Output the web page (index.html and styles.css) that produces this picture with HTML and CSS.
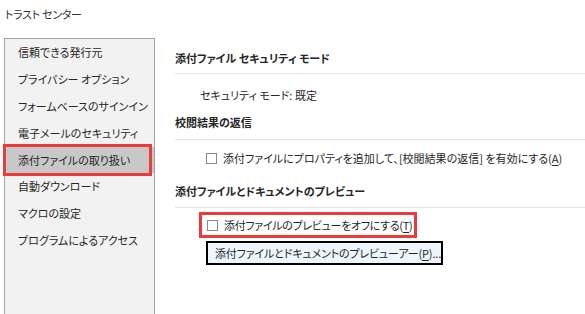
FILE: index.html
```html
<!DOCTYPE html>
<html lang="ja">
<head>
<meta charset="utf-8">
<title>トラスト センター</title>
<link rel="stylesheet" href="styles.css">
</head>
<body>
<div class="window">
  <div class="titlebar">トラスト センター</div>
  <div class="main">
    <nav class="sidebar">
      <div class="nav-item">信頼できる発行元</div>
      <div class="nav-item">プライバシー オプション</div>
      <div class="nav-item">フォームベースのサインイン</div>
      <div class="nav-item">電子メールのセキュリティ</div>
      <div class="nav-item selected">添付ファイルの取り扱い</div>
      <div class="nav-item">自動ダウンロード</div>
      <div class="nav-item">マクロの設定</div>
      <div class="nav-item">プログラムによるアクセス</div>
    </nav>
    <section class="content">
      <div class="heading h1">添付ファイル セキュリティ モード</div>
      <div class="info">セキュリティ モード: 既定</div>
      <div class="heading h2">校閲結果の返信</div>
      <div class="check-row row-review">
        <span class="box"></span>
        <span>添付ファイルにプロパティを追加して、[校閲結果の返信] を有効にする(<u>A</u>)</span>
      </div>
      <div class="heading h3">添付ファイルとドキュメントのプレビュー</div>
      <div class="check-row row-preview">
        <span class="box"></span>
        <span>添付ファイルのプレビューをオフにする(<u>T</u>)</span>
      </div>
      <div class="button">添付ファイルとドキュメントのプレビューアー(<u>P</u>)...</div>
    </section>
  </div>
</div>
</body>
</html>
```
FILE: styles.css
```css
* { box-sizing: border-box; }
html, body {
  margin: 0;
  padding: 0;
  background: #ffffff;
}
body {
  font-family: "Noto Sans CJK JP", "Noto Sans", sans-serif;
  font-size: 11px;
  font-feature-settings: "palt";
  color: #262626;
  width: 585px;
  height: 314px;
  overflow: hidden;
}
.window {
  display: flex;
  flex-direction: column;
  height: 314px;
}
.titlebar {
  height: 38px;
  padding: 6px 0 0 5px;
  line-height: 16px;
  font-size: 11px;
  letter-spacing: -0.3px;
  color: #3a3030;
}
.main {
  display: flex;
  flex: 1;
}
.sidebar {
  margin-left: 4px;
  width: 151px;
  background: #f2f2f2;
  border: 1px solid #a3a3a3;
  border-bottom: none;
  padding-top: 0;
}
.nav-item {
  height: 26.9px;
  line-height: 26px;
  padding-left: 13px;
  white-space: nowrap;
  color: #262626;
}
.nav-item.selected {
  position: relative;
  background: #c8c8c8;
}
.nav-item.selected::after {
  content: "";
  position: absolute;
  left: -2px;
  right: 2px;
  top: -3px;
  bottom: -3px;
  border: 3px solid #ec3b3b;
}
.content {
  flex: 1;
  padding-left: 20px;
}
.heading {
  font-weight: bold;
  line-height: 16px;
  border-bottom: 1px solid #e3e3e3;
  color: #262626;
}
.h1 { padding-top: 12px; padding-bottom: 7px; }
.h2 { padding-top: 11px; padding-bottom: 9px; }
.h3 { padding-top: 17px; padding-bottom: 8px; }
.info {
  margin-top: 13px;
  margin-left: 25px;
  line-height: 16px;
}
.check-row {
  display: flex;
  align-items: center;
  gap: 6px;
  line-height: 16px;
  white-space: nowrap;
}
.row-review {
  margin-top: 10px;
  margin-left: 31px;
}
.row-preview {
  margin-top: 4px;
  margin-left: 24px;
  width: 218px;
  height: 26px;
  border: 3px solid #ec3b3b;
  padding-left: 5px;
  letter-spacing: -0.3px;
}
.box {
  display: inline-block;
  width: 11px;
  height: 11px;
  border: 1px solid #8a8a8a;
  background: #ffffff;
  flex: none;
}
.button {
  margin-top: 3px;
  margin-left: 31px;
  width: 237px;
  height: 24px;
  border: 2px solid #000000;
  background: #eef5fc;
  padding-left: 7px;
  line-height: 20px;
  white-space: nowrap;
  letter-spacing: -0.15px;
}
u { text-underline-offset: 2px; }
```
